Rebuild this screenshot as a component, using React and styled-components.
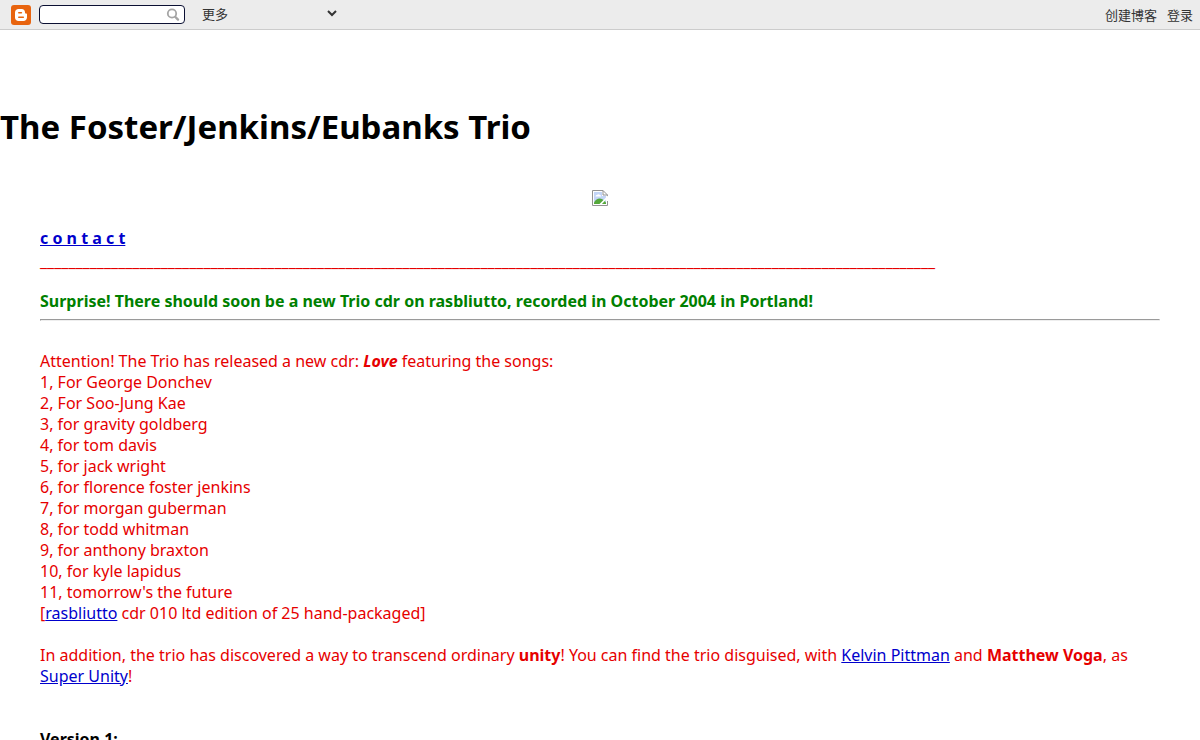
import React from 'react';
import styled, { createGlobalStyle } from 'styled-components';

const GlobalStyle = createGlobalStyle`
  body {
    margin: 0;
    background: #fff;
    color: #000;
    font-family: 'Noto Sans', 'Noto Sans CJK SC', sans-serif;
    font-size: 16px;
    line-height: 21px;
  }
`;

const Navbar = styled.nav`
  box-sizing: border-box;
  height: 30px;
  padding: 0 7px 0 11px;
  display: flex;
  align-items: center;
  background: #ececec;
  border-bottom: 1px solid #ccc;
`;

const LogoLink = styled.a`
  display: flex;
  margin-right: 8px;
`;

const SearchForm = styled.form`
  box-sizing: border-box;
  width: 146px;
  height: 19px;
  margin: 0 13px 0 0;
  padding: 0 4px;
  display: flex;
  align-items: center;
  background: #fff;
  border: 1px solid #0b1033;
  border-radius: 4px;
`;

const SearchInput = styled.input`
  flex: 1;
  min-width: 0;
  padding: 0;
  border: 0;
  outline: none;
  background: transparent;
  font-size: 13px;
`;

const SearchButton = styled.button`
  display: flex;
  padding: 0;
  border: 0;
  background: none;
`;

const More = styled.select`
  width: 142px;
  height: 20px;
  margin: 0 0 3px;
  padding: 0;
  border: 0;
  background: transparent;
  color: #333;
  font-family: 'Noto Sans CJK SC', sans-serif;
  font-size: 13px;
`;

const Account = styled.div`
  margin-left: auto;
  display: flex;
  gap: 10px;
`;

const AccountLink = styled.a`
  color: #333;
  font-family: 'Noto Sans CJK SC', sans-serif;
  font-size: 13px;
  text-decoration: none;
`;

const Title = styled.h1`
  margin: 75px 0 41px;
  font-size: 33px;
  line-height: 44px;
`;

const Picture = styled.div`
  display: flex;
  justify-content: center;
`;

const Content = styled.main`
  margin: 22px 40px;
  color: #e60000;
`;

const Link = styled.a`
  color: #0000cc;
`;

const Line = styled.div`
  line-height: 25px;
`;

const News = styled.strong`
  display: block;
  margin-top: 17px;
  color: #008000;
`;

const Rule = styled.hr`
  margin: 7px 0 30px;
`;

const Paragraph = styled.p`
  margin: 0 0 21px;
`;

const Songs = styled.ol`
  margin: 0;
  padding: 0;
  list-style: none;
`;

const Version = styled.h2`
  margin: 42px 0 0;
  color: #000;
  font-size: 16px;
  line-height: 21px;
`;

const songs = [
  'For George Donchev',
  'For Soo-Jung Kae',
  'for gravity goldberg',
  'for tom davis',
  'for jack wright',
  'for florence foster jenkins',
  'for morgan guberman',
  'for todd whitman',
  'for anthony braxton',
  'for kyle lapidus',
  "tomorrow's the future",
];

const BloggerLogo = () => (
  <svg width="20" height="20" viewBox="0 0 20 20" aria-hidden="true">
    <rect width="20" height="20" rx="3" fill="#e8640f" />
    <path
      d="M7.5 4h3.2c2 0 3.3 1.4 3.3 3.2 0 1 .3 1.3 1 1.3.6 0 1 .4 1 1v2.8c0 2.1-1.5 3.7-3.6 3.7H7.6C5.5 16 4 14.4 4 12.4V7.5C4 5.5 5.5 4 7.5 4z"
      fill="#fff"
    />
    <path d="M7.8 7.7h2.6M7.8 12.2h4.5" stroke="#e8640f" strokeWidth="1.6" strokeLinecap="round" />
  </svg>
);

const SearchIcon = () => (
  <svg width="14" height="14" viewBox="0 0 14 14" fill="none" stroke="#a5a5a5" aria-hidden="true">
    <circle cx="6" cy="5.5" r="4.2" strokeWidth="1.8" />
    <path d="M9.4 9l2.6 2.6" strokeWidth="2.4" strokeLinecap="round" />
  </svg>
);

const BrokenImage = () => (
  <svg width="16" height="16" viewBox="0 0 16 16" role="img" aria-label="The trio">
    <path d="M.5.5h10.5l4.5 4.5v10.5H.5z" fill="#fff" />
    <path d="M2 2h8v4h4v8H2z" fill="#c3d5f7" />
    <path d="M3.5 6.5c0-1 .8-1.5 1.5-1.5.5-1 2.5-1 3 .3.8 0 1.2.5 1.2 1.2z" fill="#fff" />
    <path d="M2 14v-1.5c1.5-2.5 3.5-4 5.5-4S12 10 14 12.5V14z" fill="#55a83b" />
    <path d="M.5 15.5V.5h10.5l4.5 4.5v3M11 .5V5h4.5M.5 15.5h15V11" fill="none" stroke="#929292" />
    <path d="M16 7.500l-7 7.500H6.500L16 5.500z" fill="#fff" />
  </svg>
);

const App = () => (
  <>
    <GlobalStyle />
    <Navbar>
      <LogoLink href="#" aria-label="Blogger">
        <BloggerLogo />
      </LogoLink>
      <SearchForm>
        <SearchInput type="text" aria-label="搜索" />
        <SearchButton type="submit" aria-label="搜索">
          <SearchIcon />
        </SearchButton>
      </SearchForm>
      <More aria-label="更多">
        <option>更多</option>
      </More>
      <Account>
        <AccountLink href="#">创建博客</AccountLink>
        <AccountLink href="#">登录</AccountLink>
      </Account>
    </Navbar>
    <Title>The Foster/Jenkins/Eubanks Trio</Title>
    <Picture>
      <BrokenImage />
    </Picture>
    <Content>
      <Link href="#">
        <b>c o n t a c t</b>
      </Link>
      <Line>{'_'.repeat(126)}</Line>
      <News>Surprise! There should soon be a new Trio cdr on rasbliutto, recorded in October 2004 in Portland!</News>
      <Rule />
      <Paragraph as="div">
        Attention! The Trio has released a new cdr: <b><i>Love</i></b> featuring the songs:
        <Songs>
          {songs.map((song, i) => (
            <li key={song}>{`${i + 1}, ${song}`}</li>
          ))}
        </Songs>
        [<Link href="#">rasbliutto</Link> cdr 010 ltd edition of 25 hand-packaged]
      </Paragraph>
      <Paragraph>
        In addition, the trio has discovered a way to transcend ordinary <b>unity</b>! You can find the trio
        disguised, with <Link href="#">Kelvin Pittman</Link> and <b>Matthew Voga</b>, as{' '}
        <Link href="#">Super Unity</Link>!
      </Paragraph>
      <Version>Version 1:</Version>
    </Content>
  </>
);

export default App;
